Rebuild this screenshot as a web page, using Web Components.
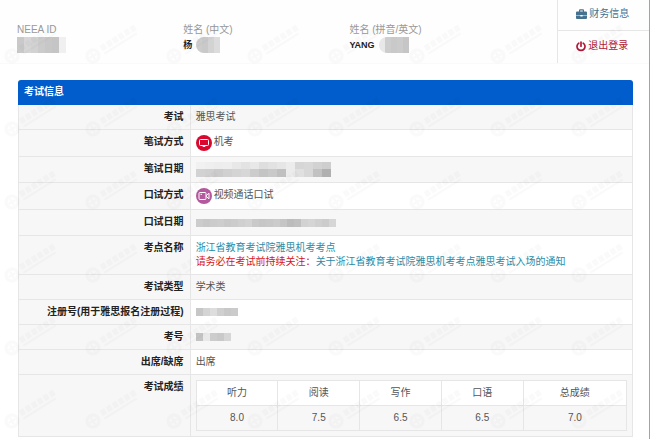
<!DOCTYPE html>
<html lang="zh-CN">
<head>
  <meta charset="utf-8">
  <meta name="viewport" content="width=device-width, initial-scale=1">
  <title>考试信息</title>
  <style>
    body {
      margin: 0;
      background: #fff;
      color: #555;
      font: 10px/14px "Liberation Sans", "Noto Sans CJK SC", sans-serif;
    }
  </style>
</head>
<body>
  <exam-page>
    <user-bar slot="header">
      <user-field label="NEEA ID"><pixel-mask cells="c9 d6 d2 cb c7 c5 f0" size="7" rows="16"></pixel-mask></user-field>
      <user-field label="姓名 (中文)">杨<pixel-mask class="name" cells="cc c9 d3 dc" size="6" rows="16" round></pixel-mask></user-field>
      <user-field label="姓名 (拼音/英文)">YANG<pixel-mask class="name" cells="e8 cd c9 cb c6" size="6" rows="16" round></pixel-mask></user-field>
      <nav-link slot="nav" icon="briefcase">财务信息</nav-link>
      <nav-link slot="nav" icon="power">退出登录</nav-link>
    </user-bar>

    <exam-table heading="考试信息">
      <span slot="exam">雅思考试</span>
      <mode-label slot="written" type="computer">机考</mode-label>
      <pixel-mask slot="written-date" cells="d2 d0 cb d0 d4 d7 cc c4 c9 c0 ec e0 d8 c2 b0" top="f1 ef ed ee e8 e3 e8 de e2 e6 ec d6 d8 d2 ce" size="9" rows="15"></pixel-mask>
      <mode-label slot="oral" type="video">视频通话口试</mode-label>
      <pixel-mask slot="oral-date" cells="cc c8 cb cd c9 cc d0 d3 c9 c6 c8 cb c5 bc c0 d2 d5 d0 cc d6" size="7" rows="8" tall></pixel-mask>
      <site-notice slot="site" name="浙江省教育考试院雅思机考考点" notice="关于浙江省教育考试院雅思机考考点雅思考试入场的通知">请务必在考试前持续关注：</site-notice>
      <span slot="category">学术类</span>
      <pixel-mask slot="register" cells="c6 d4 dd cf c8 cb" size="7" rows="8"></pixel-mask>
      <pixel-mask slot="number" cells="c4 e9 cd c9 d6" size="7" rows="8"></pixel-mask>
      <span slot="attendance">出席</span>
      <score-table slot="scores" listening="8.0" reading="7.5" writing="6.5" speaking="6.5" overall="7.0"></score-table>
    </exam-table>
  </exam-page>

  <script>
    class ExamPage extends HTMLElement {
      constructor() {
        super();
        this.attachShadow({ mode: 'open' });
        this.shadowRoot.innerHTML = `
          <style>
            :host {
              display: block;
              position: relative;
              box-sizing: border-box;
              height: 100vh;
              overflow: hidden;
              border-right: 1px solid #a3a3a3;
            }

            main {
              padding: 16px 16px 0 18px;
            }

            #watermark {
              position: absolute;
              top: 0;
              left: 0;
              width: 100%;
              height: 100%;
              pointer-events: none;
              opacity: 0.014;
            }
          </style>

          <slot name="header"></slot>
          <main><slot></slot></main>
          <svg id="watermark" aria-hidden="true">
            <defs>
              <pattern id="mark" width="81" height="73" patternUnits="userSpaceOnUse">
                <g transform="translate(12 56) rotate(-32)" fill="none" stroke="#000">
                  <circle r="6" stroke-width="3"/>
                  <path d="M-4 0h8M0-4v8" stroke-width="2"/>
                  <path d="M11-2h40" stroke-width="6" stroke-dasharray="5 2"/>
                  <path d="M11 4h38" stroke-width="2"/>
                </g>
              </pattern>
            </defs>
            <rect width="100%" height="100%" fill="url(#mark)"/>
          </svg>
        `;
      }
    }

    class UserBar extends HTMLElement {
      constructor() {
        super();
        this.attachShadow({ mode: 'open' });
        this.shadowRoot.innerHTML = `
          <style>
            :host {
              display: flex;
              background: #fefefe;
              border-bottom: 1px solid #fafafa;
            }

            #fields {
              flex: 1;
              display: grid;
              grid-template-columns: 4fr 4fr 5fr;
              padding: 23px 0 0 17px;
            }

            nav {
              width: 14%;
              border-left: 1px solid #e6e6e6;
            }

            ::slotted(nav-link:not(:last-child)) {
              border-bottom: 1px solid #e6e6e6;
            }
          </style>

          <div id="fields"><slot></slot></div>
          <nav><slot name="nav"></slot></nav>
        `;
      }
    }

    class UserField extends HTMLElement {
      constructor() {
        super();
        this.attachShadow({ mode: 'open' });
        this.shadowRoot.innerHTML = `
          <style>
            :host {
              display: block;
            }

            #label {
              color: #999;
            }

            #value {
              display: flex;
              align-items: center;
              height: 16px;
              color: #222;
              font-weight: bold;
              font-size: 9px;
            }

            ::slotted(.name) {
              margin-left: 4px;
            }
          </style>

          <div id="label">${this.getAttribute('label')}</div>
          <div id="value"><slot></slot></div>
        `;
      }
    }

    const navIcons = {
      briefcase: `
        <path fill="currentColor" fill-rule="evenodd" d="M3 2.500V1.500Q3 .3 4 .3h3q1 0 1 1.200v1h2q1 0 1 1v2.500H0V3.500q0-1 1-1zM4.200 2.500h2.600V1.500H4.200zM0 6.500h4.400v1h2.200v-1H11V9q0 1-1 1H1Q0 10 0 9z"/>
      `,
      power: `
        <path fill="none" stroke="currentColor" stroke-width="1.700" stroke-linecap="round" d="M5 1v4.200M2.800 2.100a4 4 0 1 0 4.400 0"/>
      `
    };

    class NavLink extends HTMLElement {
      constructor() {
        super();
        const icon = this.getAttribute('icon');
        this.attachShadow({ mode: 'open' });
        this.shadowRoot.innerHTML = `
          <style>
            :host {
              display: block;
              padding: 7px 0 9px 18px;
              color: #43718f;
            }

            :host([icon="power"]) {
              padding: 8px 0 10px 18px;
              color: #b01838;
            }

            a {
              display: flex;
              align-items: center;
              gap: 2px;
              color: inherit;
              text-decoration: none;
            }

            svg {
              flex: none;
            }
          </style>

          <a href="#${icon}">
            <svg width="${icon === 'power' ? 10 : 11}" height="11" viewBox="0 0 ${icon === 'power' ? 10 : 11} 11" aria-hidden="true">${navIcons[icon]}</svg>
            <slot></slot>
          </a>
        `;
      }
    }

    // strip of grey blocks covering personal data
    class PixelMask extends HTMLElement {
      constructor() {
        super();
        const size = Number(this.getAttribute('size'));
        const rows = Number(this.getAttribute('rows'));
        const cells = this.getAttribute('cells').split(' ');
        const top = this.hasAttribute('top') ? this.getAttribute('top').split(' ') : null;
        const block = (c, i, y, h) => `<rect x="${i * size}" y="${y}" width="${size}" height="${h}" fill="#${c}${c}${c}"/>`;
        const half = Math.floor(rows / 2);

        this.attachShadow({ mode: 'open' });
        this.shadowRoot.innerHTML = `
          <style>
            :host {
              display: flex;
              align-items: center;
              height: 14px;
            }

            :host([top]),
            :host([tall]) {
              height: 15px;
            }

            :host([round]) svg {
              border-radius: 8px 0 0 8px;
            }

            svg {
              display: block;
              flex: none;
            }
          </style>

          <svg width="${cells.length * size}" height="${rows}" shape-rendering="crispEdges" aria-hidden="true">
            ${cells.map((c, i) => block(c, i, 0, rows)).join('')}
            ${top ? top.map((c, i) => block(c, i, 0, half)).join('') : ''}
          </svg>
        `;
      }
    }

    const modeIcons = {
      computer: `
        <circle cx="8" cy="8" r="8" fill="#d9082f"/>
        <rect x="3.500" y="4.500" width="9" height="6" rx="1" fill="none" stroke="#fff"/>
        <path d="M6.200 12h3.600L8 10.500z" fill="#fff"/>
      `,
      video: `
        <circle cx="8" cy="8" r="8" fill="#b5599f"/>
        <rect x="3" y="4.500" width="7" height="7" rx="1" fill="none" stroke="#fff"/>
        <path d="M10.500 7.300 13 5.200v5.600l-2.500-2.100z" fill="none" stroke="#fff" stroke-linejoin="round"/>
        <path d="M4.500 6.300h1.500" stroke="#fff"/>
      `
    };

    class ModeLabel extends HTMLElement {
      constructor() {
        super();
        this.attachShadow({ mode: 'open' });
        this.shadowRoot.innerHTML = `
          <style>
            :host {
              display: flex;
              gap: 2px;
            }
          </style>

          <svg width="16" height="16" viewBox="0 0 16 16" aria-hidden="true">${modeIcons[this.getAttribute('type')]}</svg>
          <span><slot></slot></span>
        `;
      }
    }

    class SiteNotice extends HTMLElement {
      constructor() {
        super();
        this.attachShadow({ mode: 'open' });
        this.shadowRoot.innerHTML = `
          <style>
            :host {
              display: block;
              color: #2b8ca8;
            }

            a {
              color: inherit;
              text-decoration: none;
            }

            #warning {
              color: #d51522;
            }
          </style>

          <div><a href="#site">${this.getAttribute('name')}</a></div>
          <div><span id="warning"><slot></slot></span><a href="#notice">${this.getAttribute('notice')}</a></div>
        `;
      }
    }

    const scoreNames = {
      listening: '听力',
      reading: '阅读',
      writing: '写作',
      speaking: '口语',
      overall: '总成绩'
    };

    class ScoreTable extends HTMLElement {
      constructor() {
        super();
        const keys = Object.keys(scoreNames);
        this.attachShadow({ mode: 'open' });
        this.shadowRoot.innerHTML = `
          <style>
            :host {
              display: block;
            }

            table {
              width: 100%;
              table-layout: fixed;
              border-collapse: collapse;
              background: #fff;
            }

            th, td {
              box-sizing: border-box;
              height: 25px;
              padding: 5px;
              border: 1px solid #e6e6e6;
              font-weight: normal;
              text-align: center;
            }

            th {
              width: 19%;
            }

            th:last-child {
              width: 24%;
            }

            td {
              background: #f7f7f7;
            }
          </style>

          <table>
            <thead><tr>${keys.map(key => `<th scope="col">${scoreNames[key]}</th>`).join('')}</tr></thead>
            <tbody><tr>${keys.map(key => `<td>${this.getAttribute(key)}</td>`).join('')}</tr></tbody>
          </table>
        `;
      }
    }

    const examRows = [
      ['exam', '考试'],
      ['written', '笔试方式'],
      ['written-date', '笔试日期'],
      ['oral', '口试方式'],
      ['oral-date', '口试日期'],
      ['site', '考点名称'],
      ['category', '考试类型'],
      ['register', '注册号(用于雅思报名注册过程)'],
      ['number', '考号'],
      ['attendance', '出席/缺席'],
      ['scores', '考试成绩']
    ];

    class ExamTable extends HTMLElement {
      constructor() {
        super();
        this.attachShadow({ mode: 'open' });
        this.shadowRoot.innerHTML = `
          <style>
            :host {
              display: block;
            }

            h2 {
              margin: 0;
              padding: 5px 6px 6px;
              border-radius: 3px 3px 0 0;
              background: #005dcb;
              color: #fff;
              font-size: 10px;
            }

            table {
              width: 100%;
              table-layout: fixed;
              border-collapse: separate;
              border-spacing: 0;
              border: solid #e6e6e6;
              border-width: 0 1px;
              box-sizing: border-box;
            }

            th, td {
              padding: 5px;
              border-bottom: 1px solid #e6e6e6;
              vertical-align: top;
            }

            th {
              width: 28%;
              box-sizing: border-box;
              padding-right: 6px;
              border-right: 1px solid #e6e6e6;
              background: #f7f7f7;
              color: #222;
              text-align: right;
            }

            tr:nth-child(odd) td {
              background: #f7f7f7;
            }
          </style>

          <h2>${this.getAttribute('heading')}</h2>
          <table>
            <tbody>
              ${examRows.map(([name, label]) => `
                <tr>
                  <th scope="row">${label}</th>
                  <td><slot name="${name}"></slot></td>
                </tr>
              `).join('')}
            </tbody>
          </table>
        `;
      }
    }

    customElements.define('exam-page', ExamPage);
    customElements.define('user-bar', UserBar);
    customElements.define('user-field', UserField);
    customElements.define('nav-link', NavLink);
    customElements.define('pixel-mask', PixelMask);
    customElements.define('mode-label', ModeLabel);
    customElements.define('site-notice', SiteNotice);
    customElements.define('score-table', ScoreTable);
    customElements.define('exam-table', ExamTable);
  </script>
</body>
</html>
